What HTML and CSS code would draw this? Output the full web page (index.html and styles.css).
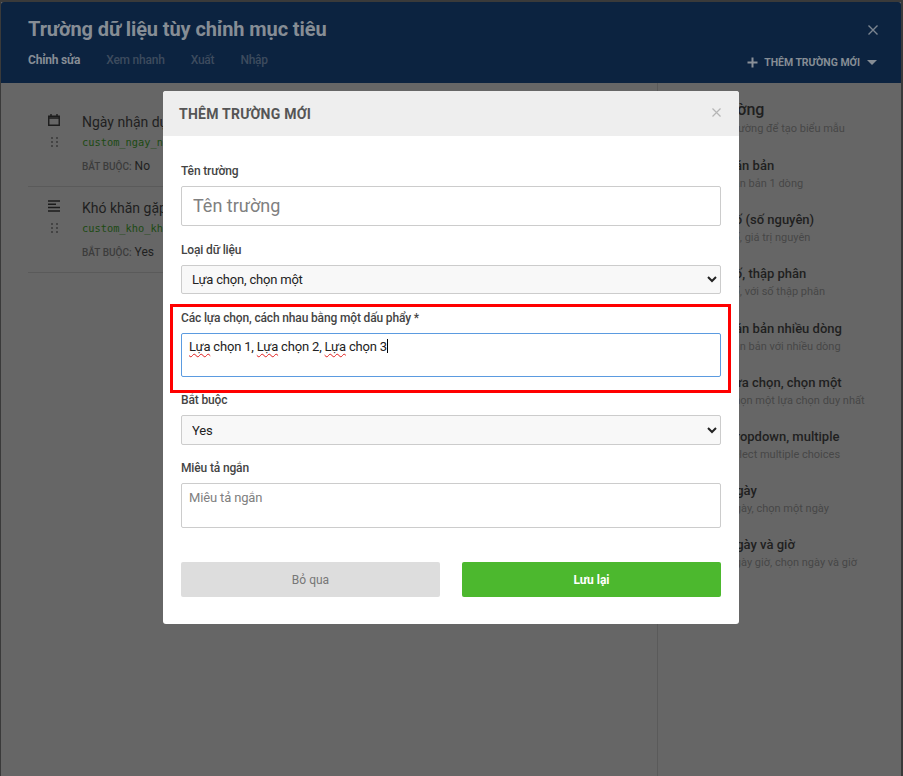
FILE: index.html
```html
<!DOCTYPE html>
<html lang="vi">
<head>
  <meta charset="UTF-8">
  <meta name="viewport" content="width=device-width, initial-scale=1.0">
  <title>Trường dữ liệu tùy chỉnh mục tiêu</title>
  <link rel="stylesheet" href="styles.css">
</head>
<body>
  <div class="panel">
    <header class="topbar">
      <div class="topbar-row">
        <h1>Trường dữ liệu tùy chỉnh mục tiêu</h1>
        <svg class="topbar-close" width="10" height="10" viewBox="0 0 10 10"><path d="M0.5 0.5L9.5 9.5M9.5 0.5L0.5 9.5" stroke="#7c8590" stroke-width="1.4" fill="none"/></svg>
      </div>
      <div class="topbar-row topbar-tabs">
        <nav class="tabs">
          <a class="tab active">Chỉnh sửa</a>
          <a class="tab">Xem nhanh</a>
          <a class="tab">Xuất</a>
          <a class="tab">Nhập</a>
        </nav>
        <div class="add-field">
          <svg width="11" height="11" viewBox="0 0 11 11"><path d="M5.5 0.5V10.5M0.5 5.5H10.5" stroke="#8a9098" stroke-width="2" fill="none"/></svg>
          <span>THÊM TRƯỜNG MỚI</span>
          <i class="caret-down"></i>
        </div>
      </div>
    </header>

    <div class="content">
      <main class="field-list">
        <div class="field-row">
          <div class="field-icons">
            <svg width="12" height="12" viewBox="0 0 12 12"><path d="M0.75 2.25H11.25V11.25H0.75ZM0.75 4H11.25M3 0V2M9 0V2" stroke="#1c1c1c" stroke-width="1.4" fill="none"/></svg>
            <svg class="grip" width="7" height="10" viewBox="0 0 7 10"><path d="M0 0h2v2H0zM5 0h2v2H5zM0 4h2v2H0zM5 4h2v2H5zM0 8h2v2H0zM5 8h2v2H5z" fill="#444"/></svg>
          </div>
          <div class="field-info">
            <div class="field-name">Ngày nhận dự án</div>
            <code class="field-key">custom_ngay_nhan_du_an</code>
            <div class="field-req"><small>BẮT BUỘC:</small> No</div>
          </div>
        </div>
        <div class="field-row">
          <div class="field-icons">
            <svg width="12" height="12" viewBox="0 0 12 12"><path d="M0 1h12M0 4.3h8M0 7.6h12M0 10.9h12" stroke="#1c1c1c" stroke-width="1.5" fill="none"/></svg>
            <svg class="grip" width="7" height="10" viewBox="0 0 7 10"><path d="M0 0h2v2H0zM5 0h2v2H5zM0 4h2v2H0zM5 4h2v2H5zM0 8h2v2H0zM5 8h2v2H5z" fill="#444"/></svg>
          </div>
          <div class="field-info">
            <div class="field-name">Khó khăn gặp phải</div>
            <code class="field-key">custom_kho_khan_gap_phai</code>
            <div class="field-req"><small>BẮT BUỘC:</small> Yes</div>
          </div>
        </div>
      </main>

      <aside class="types">
        <div class="types-head">
          <h2>Loại trường</h2>
          <p>Chọn loại trường để tạo biểu mẫu</p>
        </div>
        <div class="type"><h3>Văn bản</h3><p>Văn bản 1 dòng</p></div>
        <div class="type"><h3>Số (số nguyên)</h3><p>Số, giá trị nguyên</p></div>
        <div class="type"><h3>Số, thập phân</h3><p>Số, với số thập phân</p></div>
        <div class="type"><h3>Văn bản nhiều dòng</h3><p>Văn bản với nhiều dòng</p></div>
        <div class="type"><h3>Lựa chọn, chọn một</h3><p>Chọn một lựa chọn duy nhất</p></div>
        <div class="type"><h3>Dropdown, multiple</h3><p>Select multiple choices</p></div>
        <div class="type"><h3>Ngày</h3><p>Ngày, chọn một ngày</p></div>
        <div class="type"><h3>Ngày và giờ</h3><p>Ngày giờ, chọn ngày và giờ</p></div>
      </aside>
    </div>
  </div>

  <div class="modal">
    <div class="modal-head">
      <h4>THÊM TRƯỜNG MỚI</h4>
      <svg width="9" height="9" viewBox="0 0 9 9"><path d="M0.5 0.5L8.5 8.5M8.5 0.5L0.5 8.5" stroke="#b5b5b5" stroke-width="1.2" fill="none"/></svg>
    </div>
    <form class="modal-body">
      <label class="label">Tên trường</label>
      <input class="input-lg" type="text" placeholder="Tên trường">

      <label class="label label-type">Loại dữ liệu</label>
      <select class="select">
        <option>Lựa chọn, chọn một</option>
      </select>

      <label class="label label-options">Các lựa chọn, cách nhau bằng một dấu phẩy *</label>
      <div class="fake-textarea"><span class="typo">Lựa</span> chọn 1, <span class="typo">Lựa</span> chọn 2, <span class="typo">Lựa</span> chọn 3<i class="cursor"></i></div>

      <label class="label label-required">Bắt buộc</label>
      <select class="select select-yes">
        <option>Yes</option>
      </select>

      <label class="label label-desc">Miêu tả ngắn</label>
      <textarea class="textarea" placeholder="Miêu tả ngắn"></textarea>

      <div class="actions">
        <button type="button" class="btn btn-cancel">Bỏ qua</button>
        <button type="button" class="btn btn-save">Lưu lại</button>
      </div>
    </form>
    <div class="highlight"></div>
  </div>
</body>
</html>
```

FILE: styles.css
```css
/* Page */
html, body {
  height: 100%;
}

body {
  margin: 0;
  padding: 2px 2px 0 1px;
  box-sizing: border-box;
  height: 776px;
  overflow: hidden;
  background: #3a3a3a;
  font-family: Roboto, "Liberation Sans", sans-serif;
  color: #1f1f1f;
}

.panel {
  height: 100%;
  display: flex;
  flex-direction: column;
  background: #666;
}

/* Top bar */
.topbar {
  height: 81px;
  box-sizing: border-box;
  padding: 14px 24px 0 27px;
  background: #0c2340;
  border-radius: 3px 3px 0 0;
}

.topbar-row {
  display: flex;
  justify-content: space-between;
  align-items: center;
}

.topbar h1 {
  margin: 0;
  font-size: 20px;
  line-height: 26px;
  font-weight: 700;
  letter-spacing: -0.1px;
  color: #868d95;
}

.topbar-close {
  margin: 2px -1px 0 0;
}

.topbar-tabs {
  margin-top: 9px;
}

.tabs {
  display: flex;
  gap: 26px;
}

.tab {
  font-size: 12px;
  line-height: 18px;
  font-weight: 500;
  letter-spacing: -0.22px;
  color: #3d4b5e;
}

.tab.active {
  color: #868d95;
  font-weight: 700;
}

.add-field {
  display: flex;
  align-items: center;
  gap: 6px;
  margin: 4px 0 0;
  font-size: 10.5px;
  font-weight: 700;
  letter-spacing: -0.03px;
  color: #868d95;
}

.caret-down {
  width: 0;
  height: 0;
  margin-left: 1px;
  border-left: 5.5px solid transparent;
  border-right: 5.5px solid transparent;
  border-top: 5.5px solid #868d95;
}

/* Content */
.content {
  flex: 1;
  display: flex;
}

.field-list {
  flex: 1;
  padding: 18px 27px 0 27px;
}

.field-row {
  display: flex;
  height: 86px;
  box-sizing: border-box;
  border-bottom: 1px solid #5a5a5a;
  padding-top: 12px;
}

.field-icons {
  width: 52px;
  margin-right: 2px;
  padding-top: 1px;
  display: flex;
  flex-direction: column;
  align-items: center;
  box-sizing: border-box;
  gap: 11px;
}

.field-name {
  font-size: 14px;
  line-height: 18px;
  color: #1f1f1f;
  white-space: nowrap;
}

.field-key {
  display: block;
  margin-top: 3px;
  font-family: "DejaVu Sans Mono", "Liberation Mono", monospace;
  font-size: 10.35px;
  line-height: 16px;
  color: #1c4a12;
  white-space: nowrap;
}

.field-req {
  margin-top: 7px;
  font-size: 12px;
  line-height: 18px;
  color: #1f1f1f;
}

.field-req small {
  font-size: 10px;
  font-weight: 500;
  color: #3c3c3c;
}

/* Field types */
.types {
  width: 244px;
  box-sizing: border-box;
  padding: 17px 0 0 24px;
  border-left: 1px solid #5a5a5a;
}

.types-head {
  margin-bottom: 19px;
}

.types h2 {
  margin: 0;
  font-size: 16px;
  line-height: 20px;
  font-weight: 500;
  color: #1f1f1f;
}

.types h3 {
  margin: 0;
  font-size: 13px;
  line-height: 18px;
  font-weight: 500;
  color: #1f1f1f;
  white-space: nowrap;
}

.types p {
  margin: 0;
  font-size: 11px;
  line-height: 18px;
  color: #474747;
  white-space: nowrap;
}

.type {
  height: 36px;
  margin: 0 0 18.2px 45px;
}

/* Modal */
.modal {
  position: absolute;
  left: 163px;
  top: 91px;
  width: 576px;
  height: 533px;
  background: #fff;
  border-radius: 3px;
}

.modal-head {
  height: 45px;
  box-sizing: border-box;
  padding: 0 18px 0 16px;
  display: flex;
  justify-content: space-between;
  align-items: center;
  background: #eee;
  border-radius: 3px 3px 0 0;
}

.modal-head h4 {
  margin: 0;
  font-size: 14px;
  font-weight: 700;
  letter-spacing: 0.25px;
  color: #555;
}

.modal-head svg {
  margin-bottom: 2px;
}

.modal-body {
  display: flex;
  flex-direction: column;
  padding: 26px 18px 0;
}

.label {
  font-size: 12px;
  line-height: 18px;
  font-weight: 500;
  letter-spacing: -0.15px;
  color: #444;
  margin-bottom: 6px;
}

.label-type {
  margin-top: 15px;
}

.label-options {
  margin-top: 15px;
}

.label-required {
  margin-top: 14px;
}

.label-desc {
  margin-top: 14px;
}

.input-lg {
  height: 40px;
  box-sizing: border-box;
  padding: 0 11px 2px;
  border: 1px solid #ccc;
  border-radius: 2px;
  font-family: inherit;
  font-size: 18px;
  outline: none;
}

.input-lg::placeholder,
.textarea::placeholder {
  color: #808080;
  opacity: 1;
}

.select {
  height: 29px;
  box-sizing: border-box;
  padding: 0 6px;
  border: 1px solid #ccc;
  border-radius: 2px;
  background-color: #f8f8f8;
  font-family: inherit;
  font-size: 13px;
  letter-spacing: -0.2px;
  color: #222;
}

.select-yes {
  height: 30px;
}

.fake-textarea {
  height: 44px;
  box-sizing: border-box;
  padding: 5px 7px;
  border: 1px solid #5b9be0;
  border-radius: 2px;
  font-size: 13px;
  line-height: 16px;
  letter-spacing: -0.18px;
  color: #222;
}

.typo {
  text-decoration: underline wavy #e02020 1px;
  text-underline-offset: 2px;
}

.cursor {
  display: inline-block;
  width: 1px;
  height: 14px;
  vertical-align: -2px;
  background: #000;
}

.textarea {
  height: 45px;
  box-sizing: border-box;
  padding: 6px 7px;
  border: 1px solid #ccc;
  border-radius: 2px;
  font-family: inherit;
  font-size: 13px;
  letter-spacing: -0.15px;
  resize: none;
  outline: none;
}

.actions {
  display: grid;
  grid-template-columns: 1fr 1fr;
  gap: 22px;
  margin-top: 34px;
}

.btn {
  height: 35px;
  border: none;
  border-radius: 2px;
  font-family: inherit;
  font-size: 12px;
}

.btn-cancel {
  background: #ddd;
  color: #777;
}

.btn-save {
  background: #4cb82e;
  color: #fff;
  font-weight: 700;
}

/* Red annotation around the options field */
.highlight {
  position: absolute;
  left: 7px;
  top: 213px;
  width: 561px;
  height: 89px;
  box-sizing: border-box;
  border: 3px solid #f00;
  pointer-events: none;
}
```
